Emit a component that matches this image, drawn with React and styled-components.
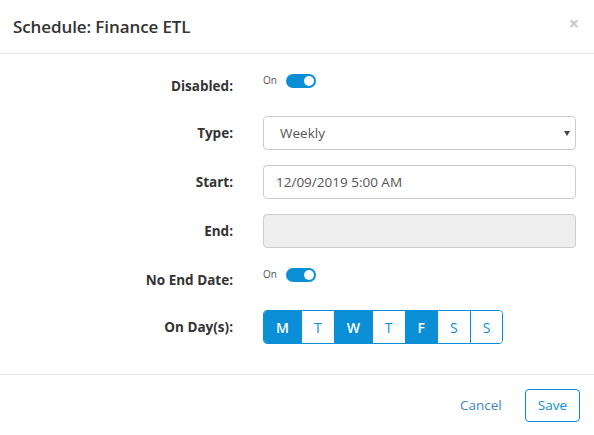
import React from 'react';
import styled, { createGlobalStyle } from 'styled-components';

const GlobalStyle = createGlobalStyle`
    html, body {
        margin: 0;
        padding: 0;
        background: #ffffff;
    }

    body {
        font-family: "Open Sans", "Noto Sans", Arial, sans-serif;
        color: #333333;
    }
`;

const days = [
    { letter: 'M', on: true },
    { letter: 'T', on: false },
    { letter: 'W', on: true },
    { letter: 'T', on: false },
    { letter: 'F', on: true },
    { letter: 'S', on: false },
    { letter: 'S', on: false }
];

const Toggle = ({ label }) => (
    <ToggleWrap>
        <ToggleText>{label}</ToggleText>
        <Switch>
            <Knob />
        </Switch>
    </ToggleWrap>
);

const App = () => {
    return (
        <Modal>
            <GlobalStyle />
            <Header>
                <Title>Schedule: Finance ETL</Title>
                <Close>×</Close>
            </Header>

            <Body>
                <Row>
                    <Label top>Disabled:</Label>
                    <Toggle label="On" />
                </Row>
                <Row>
                    <Label>Type:</Label>
                    <SelectBox>
                        <span>Weekly</span>
                        <Caret />
                    </SelectBox>
                </Row>
                <Row>
                    <Label>Start:</Label>
                    <Input>12/09/2019 5:00 AM</Input>
                </Row>
                <Row>
                    <Label>End:</Label>
                    <Input disabled />
                </Row>
                <Row>
                    <Label top>No End Date:</Label>
                    <Toggle label="On" />
                </Row>
                <Row>
                    <Label>On Day(s):</Label>
                    <DayGroup>
                        {days.map((d, i) => (
                            <Day key={i} $on={d.on}>{d.letter}</Day>
                        ))}
                    </DayGroup>
                </Row>
            </Body>

            <Footer>
                <LinkButton>Cancel</LinkButton>
                <OutlineButton>Save</OutlineButton>
            </Footer>
        </Modal>
    );
};

export default App;


const Modal = styled.div`
    width: 594px;
    height: 435px;
    background: #ffffff;
    display: flex;
    flex-direction: column;
`;

const Header = styled.div`
    height: 53px;
    display: flex;
    align-items: center;
    justify-content: space-between;
    padding: 0 15px 0 13px;
    border-bottom: 1px solid #e5e5e5;
    box-sizing: content-box;
`;

const Title = styled.h4`
    margin: 0;
    font-size: 17px;
    font-weight: 600;
    color: #333333;
    letter-spacing: -0.1px;
`;

const Close = styled.span`
    font-size: 18px;
    font-weight: 700;
    color: #c8c8c8;
    line-height: 1;
    margin-top: -8px;
`;

const Body = styled.div`
    padding: 15px 18px 5px 15px;
    display: flex;
    flex-direction: column;
    gap: 15px;
`;

const Row = styled.div`
    display: grid;
    grid-template-columns: 218px 1fr;
    column-gap: 30px;
    align-items: center;
    min-height: 32px;
`;

const Label = styled.label`
    text-align: right;
    font-size: 13.5px;
    font-weight: 700;
    color: #333333;
    align-self: ${p => (p.top ? 'start' : 'center')};
    padding-top: ${p => (p.top ? '8px' : '0')};
`;

const ToggleWrap = styled.div`
    display: flex;
    align-items: flex-start;
    gap: 9px;
    align-self: start;
    padding-top: 5px;
`;

const ToggleText = styled.span`
    font-size: 10px;
    color: #555555;
    line-height: 1;
    margin-top: 1px;
`;

const Switch = styled.span`
    position: relative;
    width: 30px;
    height: 14px;
    border-radius: 7px;
    background: #0a8ed5;
`;

const Knob = styled.span`
    position: absolute;
    right: 2px;
    top: 2px;
    width: 10px;
    height: 10px;
    border-radius: 50%;
    background: #ffffff;
`;

const Input = styled.div`
    height: 34px;
    box-sizing: border-box;
    border: 1px solid #cccccc;
    border-radius: 4px;
    padding: 0 12px;
    display: flex;
    align-items: center;
    font-size: 13.5px;
    color: #555555;
    background: ${p => (p.disabled ? '#eeeeee' : '#ffffff')};
`;

const SelectBox = styled(Input)`
    justify-content: space-between;
    padding: 0 5px 0 16px;
`;

const Caret = styled.span`
    width: 0;
    height: 0;
    border-left: 3.5px solid transparent;
    border-right: 3.5px solid transparent;
    border-top: 5px solid #444444;
`;

const DayGroup = styled.div`
    display: flex;
    justify-self: start;
    border: 1px solid #0a8ed5;
    border-radius: 4px;
    overflow: hidden;
`;

const Day = styled.span`
    height: 32px;
    padding: 0 12px;
    display: flex;
    align-items: center;
    font-size: 14px;
    font-weight: ${p => (p.$on ? 600 : 400)};
    color: ${p => (p.$on ? '#ffffff' : '#0a8ed5')};
    background: ${p => (p.$on ? '#0a8ed5' : '#ffffff')};
    border-left: 1px solid #0a8ed5;

    &:first-child {
        border-left: none;
    }
`;

const Footer = styled.div`
    margin-top: 25px;
    border-top: 1px solid #e5e5e5;
    flex: 1;
    display: flex;
    align-items: center;
    justify-content: flex-end;
    gap: 23px;
    padding: 0 14px 0 0;
`;

const LinkButton = styled.span`
    font-size: 13.5px;
    color: #3f86c8;
`;

const OutlineButton = styled.span`
    height: 33px;
    box-sizing: border-box;
    padding: 0 12px;
    display: flex;
    align-items: center;
    border: 1px solid #0a8ed5;
    border-radius: 4px;
    font-size: 13.5px;
    color: #0a8ed5;
`;
